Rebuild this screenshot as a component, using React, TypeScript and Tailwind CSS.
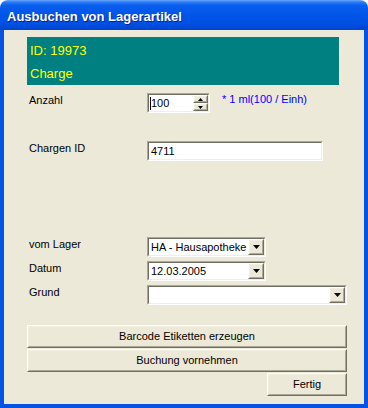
import React from "react";

// Windows XP style "Ausbuchen von Lagerartikel" dialog

const Sunken = ({ className = "", children }: { className?: string; children?: React.ReactNode }) => (
  <div className={`border border-t-[#aca899] border-l-[#aca899] border-r-white border-b-white ${className}`}>
    <div className="flex h-full w-full items-center border border-t-[#716f64] border-l-[#716f64] border-r-[#f1efe2] border-b-[#f1efe2] bg-white">
      {children}
    </div>
  </div>
);

const Raised = ({ className = "", children }: { className?: string; children?: React.ReactNode }) => (
  <div className={`border border-t-white border-l-white border-r-[#716f64] border-b-[#716f64] ${className}`}>
    <div className="flex h-full w-full items-center justify-center border border-t-[#f1efe2] border-l-[#f1efe2] border-r-[#aca899] border-b-[#aca899] bg-[#ece9d8]">
      {children}
    </div>
  </div>
);

const Arrow = ({ up = false, small = false }: { up?: boolean; small?: boolean }) =>
  small ? (
    <svg width="5" height="3" viewBox="0 0 5 3">
      <path d={up ? "M2.5 0L5 3H0z" : "M0 0h5L2.5 3z"} fill="#000" />
    </svg>
  ) : (
    <svg width="7" height="4" viewBox="0 0 7 4">
      <path d="M0 0h7L3.5 4z" fill="#000" />
    </svg>
  );

const Combo = ({ value, width }: { value: string; width: string }) => (
  <Sunken className={`${width} h-[20px]`}>
    <span className="flex-1 pl-[2px] leading-[13px]">{value}</span>
    <Raised className="h-[16px] w-[16px]">
      <Arrow />
    </Raised>
  </Sunken>
);

const Label = ({ children }: { children: React.ReactNode }) => (
  <div className="mt-[1px] w-[120px] shrink-0 pl-[2px] leading-[13px]">{children}</div>
);

const App = () => {
  return (
    <div className="flex h-[408px] w-[368px] flex-col font-['Liberation_Sans',Arial,sans-serif] text-[11px] text-black">
      {/* Title bar */}
      <div className="h-[30px] shrink-0 rounded-t-[8px] bg-[linear-gradient(to_bottom,#6aa6fb_0%,#2d7cf6_7%,#0a5eee_18%,#0055e8_50%,#0050e2_80%,#0044cf_100%)] pl-[7px] pt-[9px]">
        <span className="text-[13px] font-bold leading-[15px] text-white [text-shadow:1px_1px_0_#0a1f87]">
          Ausbuchen von Lagerartikel
        </span>
      </div>

      {/* Body */}
      <div className="flex flex-1 flex-col border-x-4 border-b-4 border-[#0553e3] bg-[#ece9d8] pl-[23px] pt-[7px]">
        <div className="flex h-[48px] w-[312px] flex-col gap-[8px] bg-[#008080] pl-[3px] pt-[6px] text-[13px] leading-[15px] text-[#ffff00]">
          <span>ID: 19973</span>
          <span>Charge</span>
        </div>

        {/* Anzahl */}
        <div className="mt-[8px] flex items-start">
          <Label>Anzahl</Label>
          <Sunken className="h-[20px] w-[63px]">
            <div className="flex flex-1 items-center pl-[1px]">
              <span className="h-[13px] w-px bg-black" />
              <span className="leading-[13px]">100</span>
            </div>
            <div className="flex h-[16px] w-[15px] flex-col">
              <Raised className="h-[8px] w-[15px]">
                <Arrow up small />
              </Raised>
              <Raised className="h-[8px] w-[15px]">
                <Arrow small />
              </Raised>
            </div>
          </Sunken>
          <span className="ml-[12px] leading-[13px] text-[#0000ff]">* 1 ml(100 / Einh)</span>
        </div>

        {/* Chargen ID */}
        <div className="mt-[28px] flex items-start">
          <Label>Chargen ID</Label>
          <Sunken className="h-[20px] w-[176px]">
            <span className="pl-[2px] leading-[13px]">4711</span>
          </Sunken>
        </div>

        {/* Lager / Datum / Grund */}
        <div className="mt-[76px] flex items-start">
          <Label>vom Lager</Label>
          <Combo value="HA - Hausapotheke" width="w-[119px]" />
        </div>
        <div className="mt-[4px] flex items-start">
          <Label>Datum</Label>
          <Combo value="12.03.2005" width="w-[119px]" />
        </div>
        <div className="mt-[4px] flex items-start">
          <Label>Grund</Label>
          <Combo value="" width="w-[200px]" />
        </div>

        {/* Buttons */}
        <div className="mt-[20px] flex w-[320px] flex-col gap-[1px]">
          <Raised className="h-[23px] w-[320px]">Barcode Etiketten erzeugen</Raised>
          <Raised className="h-[23px] w-[320px]">Buchung vornehmen</Raised>
          <Raised className="h-[23px] w-[80px] self-end">Fertig</Raised>
        </div>
      </div>
    </div>
  );
};

export default App;
